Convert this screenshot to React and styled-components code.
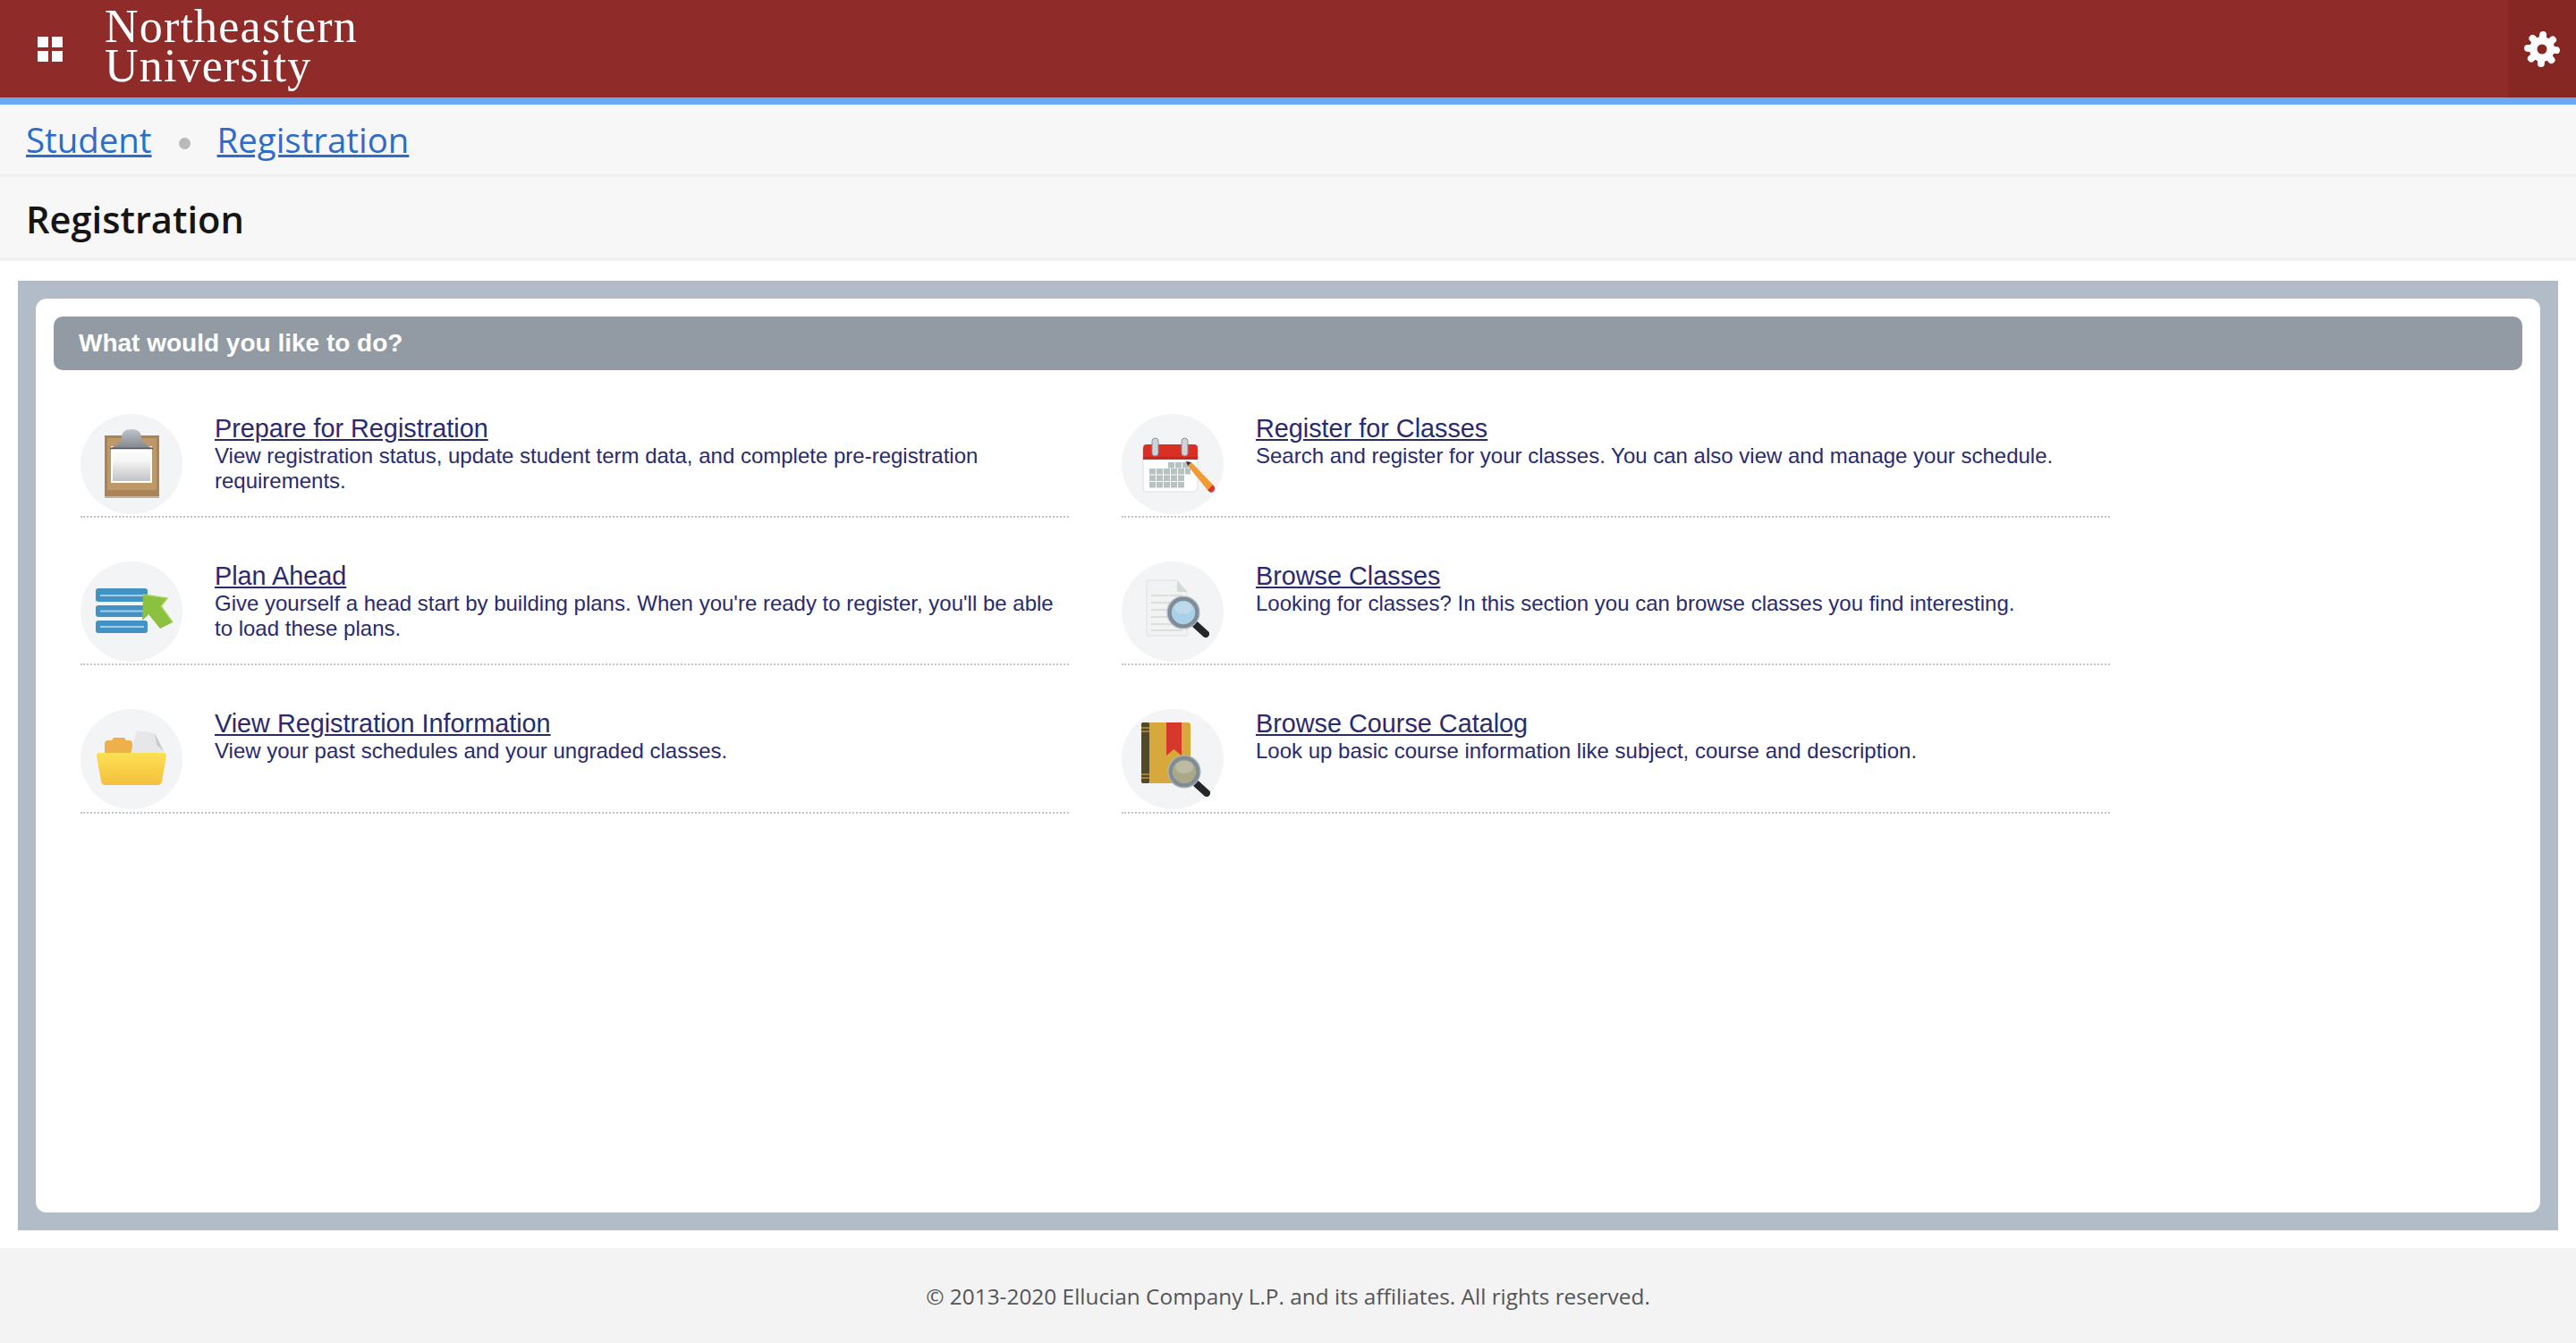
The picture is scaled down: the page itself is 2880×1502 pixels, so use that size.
import React from "react";
import styled, { createGlobalStyle } from "styled-components";

const items = [
  [
    {
      title: "Prepare for Registration",
      text: "View registration status, update student term data, and complete pre-registration requirements.",
      icon: "clipboard",
    },
    {
      title: "Register for Classes",
      text: "Search and register for your classes. You can also view and manage your schedule.",
      icon: "calendar",
    },
  ],
  [
    {
      title: "Plan Ahead",
      text: "Give yourself a head start by building plans. When you're ready to register, you'll be able to load these plans.",
      icon: "plan",
    },
    {
      title: "Browse Classes",
      text: "Looking for classes? In this section you can browse classes you find interesting.",
      icon: "browse",
    },
  ],
  [
    {
      title: "View Registration Information",
      text: "View your past schedules and your ungraded classes.",
      icon: "folder",
    },
    {
      title: "Browse Course Catalog",
      text: "Look up basic course information like subject, course and description.",
      icon: "catalog",
    },
  ],
];

const Magnifier = ({ cx, cy, glass }) => (
  <g>
    <path
      d={`M${cx + 14} ${cy + 14} L${cx + 25} ${cy + 24}`}
      stroke="#23262a"
      strokeWidth="8"
      strokeLinecap="round"
    />
    <circle cx={cx} cy={cy} r="15.5" fill={glass} stroke="#7f8c96" strokeWidth="4.5" />
    <circle cx={cx} cy={cy} r="18" fill="none" stroke="#aeb7be" strokeWidth="1.2" />
    <ellipse cx={cx} cy={cy - 5} rx="10" ry="7" fill="#fff" opacity="0.22" />
  </g>
);

const drawings = {
  clipboard: (
    <>
      <defs>
        <linearGradient id="paperFade" x1="0" y1="0" x2="0" y2="1">
          <stop offset="0" stopColor="#ffffff" />
          <stop offset="0.4" stopColor="#f5f5f5" />
          <stop offset="1" stopColor="#c1c2c4" />
        </linearGradient>
        <linearGradient id="clipFade" x1="0" y1="0" x2="0" y2="1">
          <stop offset="0" stopColor="#bfc4c9" />
          <stop offset="1" stopColor="#7f858c" />
        </linearGradient>
      </defs>
      <rect x="27" y="91" width="61" height="3" fill="#8d8d8d" opacity="0.6" />
      <rect x="27" y="24" width="61" height="68" fill="#ab8357" />
      <rect x="30" y="27" width="55" height="58" fill="#bd9869" />
      <rect x="34" y="36" width="46" height="41" fill="#ffffff" />
      <rect x="36" y="38" width="42" height="37" fill="url(#paperFade)" />
      <path
        d="M32 39 C40 35 45 32 46 27 C46 20 50 17 57 17 C64 17 68 20 68 27 C69 32 74 35 82 39 Z"
        fill="url(#clipFade)"
      />
      <path d="M33 38.5 H81" stroke="#50555b" strokeWidth="1.6" />
    </>
  ),
  calendar: (
    <>
      <rect x="24" y="44" width="61" height="43" rx="4" fill="#ffffff" stroke="#dcdee0" />
      <path d="M24 51 V38 a4 4 0 0 1 4 -4 H81 a4 4 0 0 1 4 4 V51 Z" fill="#d92f24" />
      <path d="M24 49 H85" stroke="#a9211a" strokeWidth="2" opacity="0.5" />
      <rect x="34" y="27" width="7" height="20" rx="3.5" fill="#cfd4d8" stroke="#87929a" />
      <rect x="67" y="27" width="7" height="20" rx="3.5" fill="#cfd4d8" stroke="#87929a" />
      <g fill="#b4c2c2">
        {[0, 1, 2, 3, 4].map(x =>
          [0, 1, 2].map(y => (
            <rect key={`${x}${y}`} x={31 + x * 8} y={61 + y * 7.5} width="7" height="6.5" />
          ))
        )}
        {[0, 1, 2].map(x => (
          <rect key={x} x={52 + x * 8} y={54} width="7" height="6.5" />
        ))}
        <rect x="71" y="61" width="6" height="6.5" />
      </g>
      <path d="M74 58 L78 54 L102 79 L96 85 Z" fill="#f09c34" />
      <path d="M74 58 L72 53 L78 54 Z" fill="#333" />
      <path d="M96 85 L102 79 L104 82 C105 86 101 89 98 87 Z" fill="#d8352d" />
    </>
  ),
  plan: (
    <>
      <g fill="#4292c6">
        <rect x="17" y="30" width="58" height="15" rx="3" />
        <rect x="17" y="49" width="58" height="13" rx="3" />
        <rect x="17" y="66" width="58" height="14" rx="3" />
      </g>
      <g stroke="#a5cde6" strokeWidth="2">
        <path d="M22 38 H71" />
        <path d="M22 55.5 H71" />
        <path d="M22 73 H71" />
      </g>
      <path d="M70 37 L97 41 L90 50 L103 68 L89 75 L76 59 L69 66 Z" fill="#8cc03f" />
      <path d="M70 37 L97 41 L90 50 L103 68" fill="none" stroke="#a9d35e" strokeWidth="1.5" />
    </>
  ),
  folder: (
    <>
      <defs>
        <linearGradient id="folderFade" x1="0" y1="0" x2="0" y2="1">
          <stop offset="0" stopColor="#fbe052" />
          <stop offset="1" stopColor="#f5c03e" />
        </linearGradient>
      </defs>
      <path d="M27 50 V39 a4 4 0 0 1 4 -4 h4 l2 -3 h12 l2 3 h3 a4 4 0 0 1 4 4 V50 Z" fill="#eeb04a" />
      <path d="M56 50 L63 24 L83 27 L93 47 L93 50 Z" fill="#e6e7e8" />
      <path d="M83 27 L85 40 L93 47 Z" fill="#c8cbcd" />
      <path d="M18 52 a3 3 0 0 1 3 -3 H93 a3 3 0 0 1 3 3 L91 81 a5 5 0 0 1 -5 4 H28 a5 5 0 0 1 -5 -4 Z" fill="url(#folderFade)" />
    </>
  ),
  browse: (
    <>
      <path d="M28 21 H62 L73 34 V83 H28 Z" fill="#f1f2f2" stroke="#dfe1e2" />
      <path d="M62 21 L73 34 H62 Z" fill="#d6d9da" />
      <g stroke="#dcdedf" strokeWidth="2">
        <path d="M33 38 H68" />
        <path d="M33 46 H68" />
        <path d="M33 54 H68" />
        <path d="M33 62 H68" />
        <path d="M33 70 H68" />
        <path d="M33 77 H68" />
      </g>
      <Magnifier cx={69} cy={57} glass="#a9d0e6" />
    </>
  ),
  catalog: (
    <>
      <rect x="22" y="15" width="55" height="68" rx="3" fill="#d7a83c" />
      <rect x="22" y="15" width="9" height="68" rx="2" fill="#51472b" />
      <g stroke="#c49a3a" strokeWidth="1.4">
        <path d="M22 21 H31" />
        <path d="M22 25 H31" />
        <path d="M22 73 H31" />
        <path d="M22 77 H31" />
      </g>
      <path d="M50 15 H67 V52 L58.5 45 L50 52 Z" fill="#d6382c" />
      <Magnifier cx={70} cy={70} glass="#a9a98a" />
    </>
  ),
};

export default () => (
  <>
    <GlobalStyle />
    <Header>
      <Brand>
        <GridIcon viewBox="0 0 28 28">
          <rect x="0" y="0" width="12" height="12" />
          <rect x="16" y="0" width="12" height="12" />
          <rect x="0" y="16" width="12" height="12" />
          <rect x="16" y="16" width="12" height="12" />
        </GridIcon>
        <Logo>
          Northeastern
          <br />
          University
        </Logo>
      </Brand>
      <Settings>
        <svg width="44" height="44" viewBox="-22 -22 44 44">
          {[0, 45, 90, 135, 180, 225, 270, 315].map(a => (
            <path
              key={a}
              d="M0 -10 V-16"
              stroke="#fff"
              strokeWidth="8"
              strokeLinecap="round"
              transform={`rotate(${a + 4})`}
            />
          ))}
          <circle r="14" fill="#fff" />
          <circle r="5.5" fill="#872723" />
        </svg>
      </Settings>
    </Header>
    <Breadcrumb>
      <Crumb href="#">Student</Crumb>
      <Dot />
      <Crumb href="#">Registration</Crumb>
    </Breadcrumb>
    <PageTitle>Registration</PageTitle>
    <Panel>
      <Card>
        <CardHeading>What would you like to do?</CardHeading>
        <Rows>
          {items.flat().map(item => (
            <Row key={item.title}>
              <IconCircle>
                <svg width="114" height="112" viewBox="0 0 114 112">
                  {drawings[item.icon]}
                </svg>
              </IconCircle>
              <RowText>
                <RowTitle href="#">{item.title}</RowTitle>
                <RowBody>{item.text}</RowBody>
              </RowText>
            </Row>
          ))}
        </Rows>
      </Card>
    </Panel>
    <Footer>© 2013-2020 Ellucian Company L.P. and its affiliates. All rights reserved.</Footer>
  </>
);

const GlobalStyle = createGlobalStyle`
  html, body {
    margin: 0;
    padding: 0;
    background: #fff;
  }
  body {
    font-family: "Open Sans", sans-serif;
    overflow: hidden;
  }
`;

const Header = styled.header`
  display: flex;
  justify-content: space-between;
  height: 109px;
  background: #8f2b28;
  border-bottom: 8px solid #6aa9f7;
`;

const Brand = styled.div`
  display: flex;
  align-items: center;
  padding-left: 42px;
`;

const GridIcon = styled.svg`
  width: 28px;
  height: 28px;
  fill: #fff;
  margin-right: 47px;
`;

const Logo = styled.div`
  font-family: "Liberation Serif", serif;
  font-size: 52px;
  letter-spacing: 1.2px;
  line-height: 44px;
  color: #fff;
  margin-top: -6px;
`;

const Settings = styled.div`
  display: flex;
  align-items: center;
  justify-content: center;
  width: 76px;
  background: #872723;
`;

const Breadcrumb = styled.nav`
  display: flex;
  align-items: center;
  height: 77px;
  padding-left: 29px;
  background: #f7f7f7;
  border-bottom: 4px solid #f0f0f0;
`;

const Crumb = styled.a`
  font-size: 38.4px;
  color: #2e6cc9;
  text-decoration: underline;
`;

const Dot = styled.span`
  width: 13px;
  height: 13px;
  margin: 10px 30px 0;
  border-radius: 50%;
  background: #b9b9b9;
`;

const PageTitle = styled.h1`
  display: flex;
  align-items: center;
  height: 86px;
  margin: 0;
  padding: 4px 0 0 29px;
  font-size: 41.6px;
  font-weight: 600;
  color: #151515;
  background: #f7f7f7;
  border-bottom: 4px solid #f0f0f0;
`;

const Panel = styled.main`
  height: 1022px;
  margin: 22px 20px 20px;
  padding: 20px;
  background: #b2bcc8;
`;

const Card = styled.section`
  height: 100%;
  padding: 20px;
  box-sizing: border-box;
  background: #fff;
  border-radius: 12px;
`;

const CardHeading = styled.h2`
  height: 60px;
  margin: 0;
  padding-left: 28px;
  font-family: "Liberation Sans", sans-serif;
  font-size: 28px;
  font-weight: 700;
  line-height: 60px;
  color: #fff;
  background: #929ba3;
  border-radius: 10px;
`;

const Rows = styled.div`
  display: grid;
  grid-template-columns: 1105px 1105px;
  grid-template-rows: 165px 165px 166px;
  column-gap: 59px;
  padding-left: 30px;
`;

const Row = styled.article`
  display: flex;
  box-sizing: border-box;
  padding-top: 49px;
  border-bottom: 2px dotted #c4c4c4;
`;

const IconCircle = styled.div`
  flex: none;
  width: 114px;
  height: 112px;
  margin-right: 36px;
  border-radius: 50%;
  background: #f3f4f6;

  svg {
    display: block;
    filter: blur(0.6px);
  }
`;

const RowText = styled.div`
  font-family: "Liberation Sans", sans-serif;
  color: #2a2a6e;
`;

const RowTitle = styled.a`
  display: inline-block;
  font-size: 28.8px;
  line-height: 33px;
  color: #2a2a6e;
  text-decoration: underline;
`;

const RowBody = styled.p`
  margin: 0;
  font-size: 24px;
  line-height: 28px;
`;

const Footer = styled.footer`
  display: flex;
  align-items: center;
  justify-content: center;
  height: 106px;
  font-size: 24.4px;
  color: #555;
  background: #f3f3f3;
`;
